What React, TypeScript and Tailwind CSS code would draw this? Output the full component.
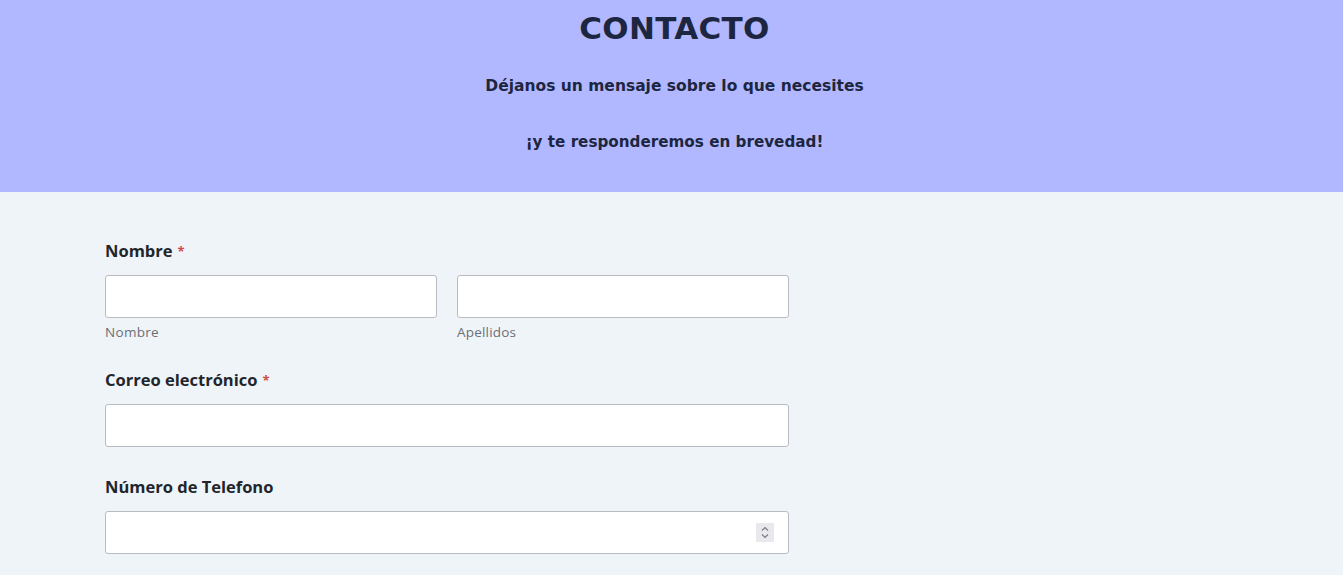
import React from "react";

function Req() {
  return <span className="text-[#d14a4a] ml-[5px] text-[13px] align-top">*</span>;
}

export default function App() {
  return (
    <div className="min-h-[575px] bg-[#eff4f8]" style={{ fontFamily: "'DejaVu Sans', sans-serif" }}>
      <header className="bg-[#b1b8ff] h-[192px] flex flex-col items-center pl-[6px] text-[#1d2640]">
        <h1 className="text-[31px] font-bold mt-[9px] leading-[38px] tracking-[0.3px]">CONTACTO</h1>
        <p className="text-[15.5px] font-bold mt-[29px] leading-[20px]">Déjanos un mensaje sobre lo que necesites</p>
        <p className="text-[15.2px] font-bold mt-[36px] leading-[20px]">¡y te responderemos en brevedad!</p>
      </header>
      <form className="w-[684px] ml-[105px] pt-[49px] text-[#22252b]" style={{ fontFamily: "'Open Sans', sans-serif" }}>
        <label className="block text-[16.5px] font-bold leading-[20px]">
          Nombre<Req />
        </label>
        <div className="grid grid-cols-2 gap-[20px] mt-[14px]">
          <div>
            <input className="w-full h-[43px] bg-white border border-[#b8bcc2] rounded-[3px]" />
            <div className="text-[13.5px] text-[#6b6f76] mt-[5px] leading-[18px] tracking-[0.3px]">Nombre</div>
          </div>
          <div>
            <input className="w-full h-[43px] bg-white border border-[#b8bcc2] rounded-[3px]" />
            <div className="text-[13.5px] text-[#6b6f76] mt-[5px] leading-[18px] tracking-[0.2px]">Apellidos</div>
          </div>
        </div>
        <label className="block text-[16.5px] font-bold leading-[20px] mt-[29px]">
          Correo electrónico<Req />
        </label>
        <input className="block w-full h-[43px] mt-[14px] bg-white border border-[#b8bcc2] rounded-[3px]" />
        <label className="block text-[16.5px] font-bold leading-[20px] mt-[30px]">Número de Telefono</label>
        <div className="relative mt-[14px]">
          <input className="block w-full h-[43px] bg-white border border-[#b8bcc2] rounded-[3px]" />
          <div className="absolute right-[15px] top-[12px] w-[18px] h-[19px] bg-[#e9e9ed] flex items-center justify-center">
            <svg width="10" height="15" viewBox="0 0 10 15" fill="none" stroke="#7a7d85" strokeWidth="1.2">
              <path d="M2 5.5 L5 2.5 L8 5.5" />
              <path d="M2 9.5 L5 12.5 L8 9.5" />
            </svg>
          </div>
        </div>
      </form>
    </div>
  );
}
